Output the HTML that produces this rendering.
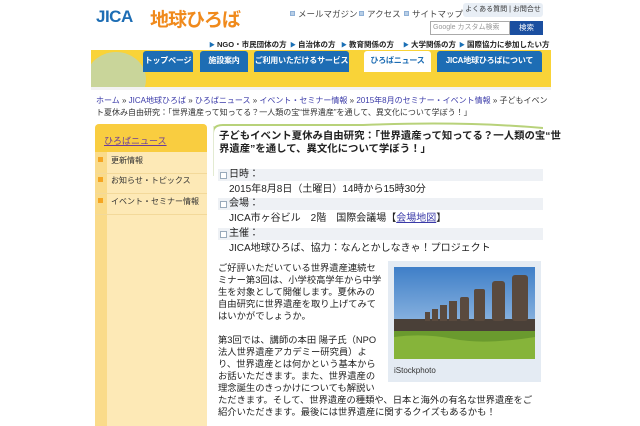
<!DOCTYPE html>
<html><head><meta charset="utf-8"><style>
*{margin:0;padding:0;box-sizing:border-box}
body{width:640px;height:426px;overflow:hidden;background:#fff;font-family:"Liberation Sans","Noto Sans CJK JP",sans-serif;color:#222;position:relative}
.a{position:absolute;white-space:nowrap}
.tl{font-size:8.5px;color:#444}
.tl b{display:inline-block;width:5px;height:5px;background:#b9cfe6;border:1px solid #8fb0d6;margin-right:3px;vertical-align:1px}
.sn{font-size:7.5px;color:#222;font-weight:bold}
.sn i{color:#1a6fb5;font-style:normal;font-size:6px;margin-right:2px}
.tab{position:absolute;top:51px;height:21px;background:#1d6db4;color:#fff;font-size:8px;font-weight:bold;text-align:center;line-height:19px;border-radius:3px 3px 0 0;white-space:nowrap;overflow:hidden;letter-spacing:-0.2px}
.bc{font-size:8px;color:#333}
.bc a{color:#3a3aa8;text-decoration:none}
.side{font-size:8px;color:#333}
.side span{display:inline-block;width:5px;height:5px;background:#f5a623;vertical-align:1px}
.bar{position:absolute;left:218px;width:325px;height:12px;background:#eef1f5;font-size:10px;line-height:12px;padding-left:11px}
.bar:before{content:"";position:absolute;left:2px;top:3px;width:5px;height:5px;border:1px solid #9ab;background:#fff}
.it{font-size:10px;color:#222}
.p{font-size:9.3px;line-height:12px;color:#222}
</style></head><body>
<div class="a" style="left:96px;top:7px;font-size:17px;color:#1d6db4;font-weight:bold;letter-spacing:-0.5px">JICA</div>
<div class="a" style="left:150px;top:5px;font-size:19px;color:#f08a1c;font-weight:bold;letter-spacing:-1px">地球ひろば</div>
<div class="a tl" style="left:290px;top:8px"><b></b>メールマガジン</div>
<div class="a tl" style="left:359px;top:8px"><b></b>アクセス</div>
<div class="a tl" style="left:404px;top:8px"><b></b>サイトマップ</div>
<div class="a" style="left:463px;top:3px;width:80px;height:14px;background:#e8eef5;border-radius:3px;font-size:7px;line-height:14px;text-align:center;color:#333">よくある質問 | お問合せ</div>
<div class="a" style="left:430px;top:21px;width:80px;height:14px;border:1px solid #aaa;font-size:7px;color:#999;line-height:12px;padding-left:2px">Google カスタム検索</div>
<div class="a" style="left:510px;top:21px;width:33px;height:14px;background:#1b4fa0;color:#fff;font-size:7.5px;text-align:center;line-height:14px">検索</div>
<div class="a sn" style="left:209px;top:39px"><i>▶</i>NGO・市民団体の方</div>
<div class="a sn" style="left:290px;top:39px"><i>▶</i>自治体の方</div>
<div class="a sn" style="left:341px;top:39px"><i>▶</i>教育関係の方</div>
<div class="a sn" style="left:403px;top:39px"><i>▶</i>大学関係の方</div>
<div class="a sn" style="left:459px;top:39px"><i>▶</i>国際協力に参加したい方</div>
<div class="a" style="left:91px;top:50px;width:460px;height:37px;background:#f9d338;overflow:hidden">
<div style="position:absolute;left:-5px;top:2px;width:60px;height:55px;border-radius:50%;background:#c9d59a"></div></div>
<div class="tab" style="left:143px;width:50px">トップページ</div>
<div class="tab" style="left:200px;width:48px">施設案内</div>
<div class="tab" style="left:254px;width:95px">ご利用いただけるサービス</div>
<div class="tab" style="left:364px;width:67px;background:#fff;color:#1d6db4">ひろばニュース</div>
<div class="tab" style="left:437px;width:105px">JICA地球ひろばについて</div>
<div class="a" style="left:91px;top:87px;width:460px;height:3px;background:#f2f2f2"></div>
<div class="a bc" style="left:96px;top:95px"><a>ホーム</a> » <a>JICA地球ひろば</a> » <a>ひろばニュース</a> » <a>イベント・セミナー情報</a> » <a>2015年8月のセミナー・イベント情報</a> » 子どもイベン</div>
<div class="a bc" style="left:96px;top:107px">ト夏休み自由研究：「世界遺産って知ってる？一人類の宝“世界遺産”を通して、異文化について学ぼう！」</div>
<div class="a" style="left:95px;top:124px;width:112px;height:302px;background:#fde9b6;border-radius:4px 4px 0 0"></div>
<div class="a" style="left:95px;top:152px;width:12px;height:274px;background:#fadb8a"></div>
<div class="a" style="left:95px;top:124px;width:112px;height:28px;background:#f9cd40;border-radius:4px 4px 0 0;font-size:9px;color:#6a3c9c;text-decoration:underline;padding:10px 0 0 9px">ひろばニュース</div>
<div class="a" style="left:95px;top:173px;width:112px;border-top:1px solid #f3d99a"></div>
<div class="a" style="left:95px;top:193px;width:112px;border-top:1px solid #f3d99a"></div>
<div class="a" style="left:95px;top:214px;width:112px;border-top:1px solid #f3d99a"></div>
<div class="a side" style="left:98px;top:155px"><span></span>　更新情報</div>
<div class="a side" style="left:98px;top:175px"><span></span>　お知らせ・トピックス</div>
<div class="a side" style="left:98px;top:196px"><span></span>　イベント・セミナー情報</div>
<svg class="a" style="left:213px;top:122px" width="330" height="12"><path d="M0 11 Q0 3 10 3 L150 3 Q250 -1 330 6" stroke="#b8d27a" stroke-width="2" fill="none"/></svg>
<div class="a" style="left:213px;top:126px;width:1px;height:50px;background:#e3ebd2"></div>
<div class="a" style="left:219px;top:130px;font-size:10.4px;font-weight:bold;line-height:13px">子どもイベント夏休み自由研究：「世界遺産って知ってる？一人類の宝“世<br>界遺産”を通して、異文化について学ぼう！」</div>
<div class="bar" style="top:169px">日時：</div>
<div class="a it" style="left:229px;top:180px">2015年8月8日（土曜日）14時から15時30分</div>
<div class="bar" style="top:198px">会場：</div>
<div class="a it" style="left:229px;top:209px">JICA市ヶ谷ビル　2階　国際会議場【<span style="color:#3a3aa8;text-decoration:underline">会場地図</span>】</div>
<div class="bar" style="top:228px">主催：</div>
<div class="a it" style="left:229px;top:239px">JICA地球ひろば、協力：なんとかしなきゃ！プロジェクト</div>
<div class="a p" style="left:218px;top:262px">ご好評いただいている世界遺産連続セ<br>ミナー第3回は、小学校高学年から中学<br>生を対象として開催します。夏休みの<br>自由研究に世界遺産を取り上げてみて<br>はいかがでしょうか。<br><br>第3回では、講師の本田 陽子氏（NPO<br>法人世界遺産アカデミー研究員）よ<br>り、世界遺産とは何かという基本から<br>お話いただきます。また、世界遺産の<br>理念誕生のきっかけについても解説い<br>ただきます。そして、世界遺産の種類や、日本と海外の有名な世界遺産をご<br>紹介いただきます。最後には世界遺産に関するクイズもあるかも！</div>
<div class="a" style="left:388px;top:261px;width:153px;height:121px;background:#e4ebf3"></div>
<svg class="a" style="left:394px;top:267px" width="141" height="92" viewBox="0 0 141 92">
<defs><linearGradient id="s" x1="0" y1="0" x2="0" y2="1"><stop offset="0" stop-color="#3f7fc8"/><stop offset="1" stop-color="#b9d4ee"/></linearGradient></defs>
<rect width="141" height="92" fill="url(#s)"/>
<rect y="52" width="141" height="14" fill="#4a4038"/>
<rect y="64" width="141" height="28" fill="#6a9a2e"/>
<path d="M0 70 Q30 66 60 72 T141 70 L141 92 L0 92Z" fill="#86b43a"/>
<g fill="#5a4a3e">
<rect x="118" y="8" width="16" height="46" rx="3"/><rect x="98" y="14" width="13" height="40" rx="3"/>
<rect x="80" y="22" width="11" height="32" rx="2"/><rect x="66" y="30" width="9" height="24" rx="2"/>
<rect x="55" y="34" width="8" height="20"/><rect x="46" y="38" width="7" height="16"/>
<rect x="38" y="42" width="6" height="12"/><rect x="31" y="45" width="5" height="9"/></g>
</svg>
<div class="a" style="left:394px;top:366px;font-size:8px;color:#333">iStockphoto</div>
</body></html>
